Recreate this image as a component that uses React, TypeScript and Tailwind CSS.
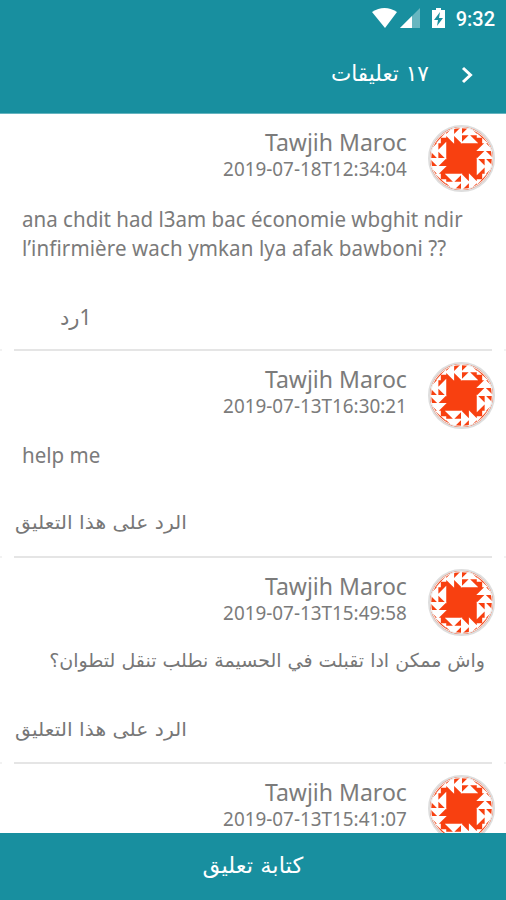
import React from 'react';

const latin = "font-['Noto_Sans','DejaVu_Sans',sans-serif]";
const arabic = "font-['DejaVu_Sans',sans-serif]";

function Avatar() {
  // White flying-geese triangles around one quarter of the solid orange square.
  const side = 'M24.500 -1V17L15.500 8ZM32.500 -1V17L23.500 8ZM31 8.500L40 -.5L49 8.500ZM31 16.500L40 7.500L49 16.500ZM6 16.500L11 11V16.500ZM11 11L16.500 5V11Z';
  return (
    <div className="size-[67px] shrink-0 overflow-hidden rounded-full border-2 border-[#dedede] bg-[#f84010]">
      <svg viewBox="0 0 64 64" className="size-full" fill="#fff">
        {[0, 90, 180, 270].map((a) => <path key={a} d={side} transform={`rotate(${a} 32 32)`} />)}
        <circle cx="32" cy="32" r="31.500" fill="none" stroke="#eee" strokeWidth="1.500" />
      </svg>
    </div>
  );
}

function Author({ date }: { date: string }) {
  return (
    <div className="flex justify-end gap-[21px] pr-[11px]">
      <div className={`flex flex-col items-end text-[#7b7b7b] ${latin}`}>
        <span className="h-[30px] origin-right scale-x-[0.96] text-[24px] leading-[33px]">Tawjih Maroc</span>
        <span className="h-6 origin-right scale-x-[0.943] text-[20px] leading-[28px]">{date}</span>
      </div>
      <Avatar />
    </div>
  );
}

function Divider() {
  return (
    <div className="flex h-[2px] shrink-0 justify-between">
      <span className="w-[2px] bg-[#f2f2f2]" />
      <span className="w-[478px] bg-[#e5e5e5]" />
      <span className="w-[2px] bg-[#f2f2f2]" />
    </div>
  );
}

function Reply() {
  return <div dir="rtl" className={`ml-[15px] w-fit origin-left scale-x-[1.07] whitespace-nowrap text-[19px] leading-[28px] text-[#777] ${arabic}`}>الرد على هذا التعليق</div>;
}

export default function App() {
  return (
    <div className="flex h-[900px] w-[506px] flex-col overflow-hidden bg-white">
      <header className="h-[114px] shrink-0 border-b border-[#65b4bf] bg-[#188f9f] text-white">
        <div className="flex h-9 justify-end pr-[11px]">
          <svg width="74" height="34" viewBox="0 0 74 34" fill="white">
            <path d="M0 12Q12.500 4 25 12L13 28Z" />
            <path d="M28 28L48 8V28Z" opacity=".35" /><path d="M28 28L40 16V28Z" />
            <path d="M60 10H64V8H69V10H73V28H60ZM68 12L62 20H66L65 26L71 18H67Z" fillRule="evenodd" />
          </svg>
          <span className="ml-[10px] font-['Roboto',sans-serif] text-[20px] font-medium leading-[38px]">9:32</span>
        </div>
        <div className="flex h-[77px] items-center justify-end pr-[32px]">
          <span dir="rtl" className={`mr-[32px] mb-[3px] origin-right scale-x-[0.98] text-[22px] ${arabic}`}>١٧ تعليقات</span>
          <svg width="13" height="18" viewBox="0 0 13 18" fill="none" stroke="white" strokeWidth="3"><path d="M2 2L9.500 9L2 16" /></svg>
        </div>
      </header>
      <main className="flex min-h-0 flex-1 flex-col overflow-hidden">
        <section className="h-[235px] shrink-0 pt-[11px]">
          <Author date="2019-07-18T12:34:04" />
          <p className={`ml-[22px] mt-[13px] w-fit origin-left scale-x-[0.978] text-[21px] leading-[29px] text-[#7b7b7b] ${latin}`}>ana chdit had l3am bac économie wbghit ndir<br /><span className="tracking-[0.1px]">l’infirmière wach ymkan lya afak bawboni ??</span></p>
          <div dir="rtl" className={`ml-[60px] mt-[39px] w-fit text-[21px] leading-[30px] text-[#777] ${arabic}`}><span className={latin}>1</span>رد</div>
        </section>
        <Divider />
        <section className="h-[205px] shrink-0 pt-[11px]">
          <Author date="2019-07-13T16:30:21" />
          <p className={`ml-[22px] mt-[12px] h-[67px] w-fit origin-left scale-x-[0.978] text-[21px] leading-[29px] text-[#7b7b7b] ${latin}`}>help me</p>
          <Reply />
        </section>
        <Divider />
        <section className="h-[204px] shrink-0 pt-[11px]">
          <Author date="2019-07-13T15:49:58" />
          <p dir="rtl" className={`mr-[21px] mt-[10px] h-[69px] whitespace-nowrap text-[19px] leading-[29px] text-[#777] ${arabic}`}>واش ممكن ادا تقبلت في الحسيمة نطلب تنقل لتطوان؟</p>
          <Reply />
        </section>
        <Divider />
        <section className="h-[80px] shrink-0 pt-[11px]"><Author date="2019-07-13T15:41:07" /></section>
      </main>
      <button dir="rtl" className={`h-[67px] shrink-0 bg-[#188f9f] pb-[2px] text-[22px] text-white ${arabic}`}><span className="inline-block scale-x-[1.03]">كتابة تعليق</span></button>
    </div>
  );
}
